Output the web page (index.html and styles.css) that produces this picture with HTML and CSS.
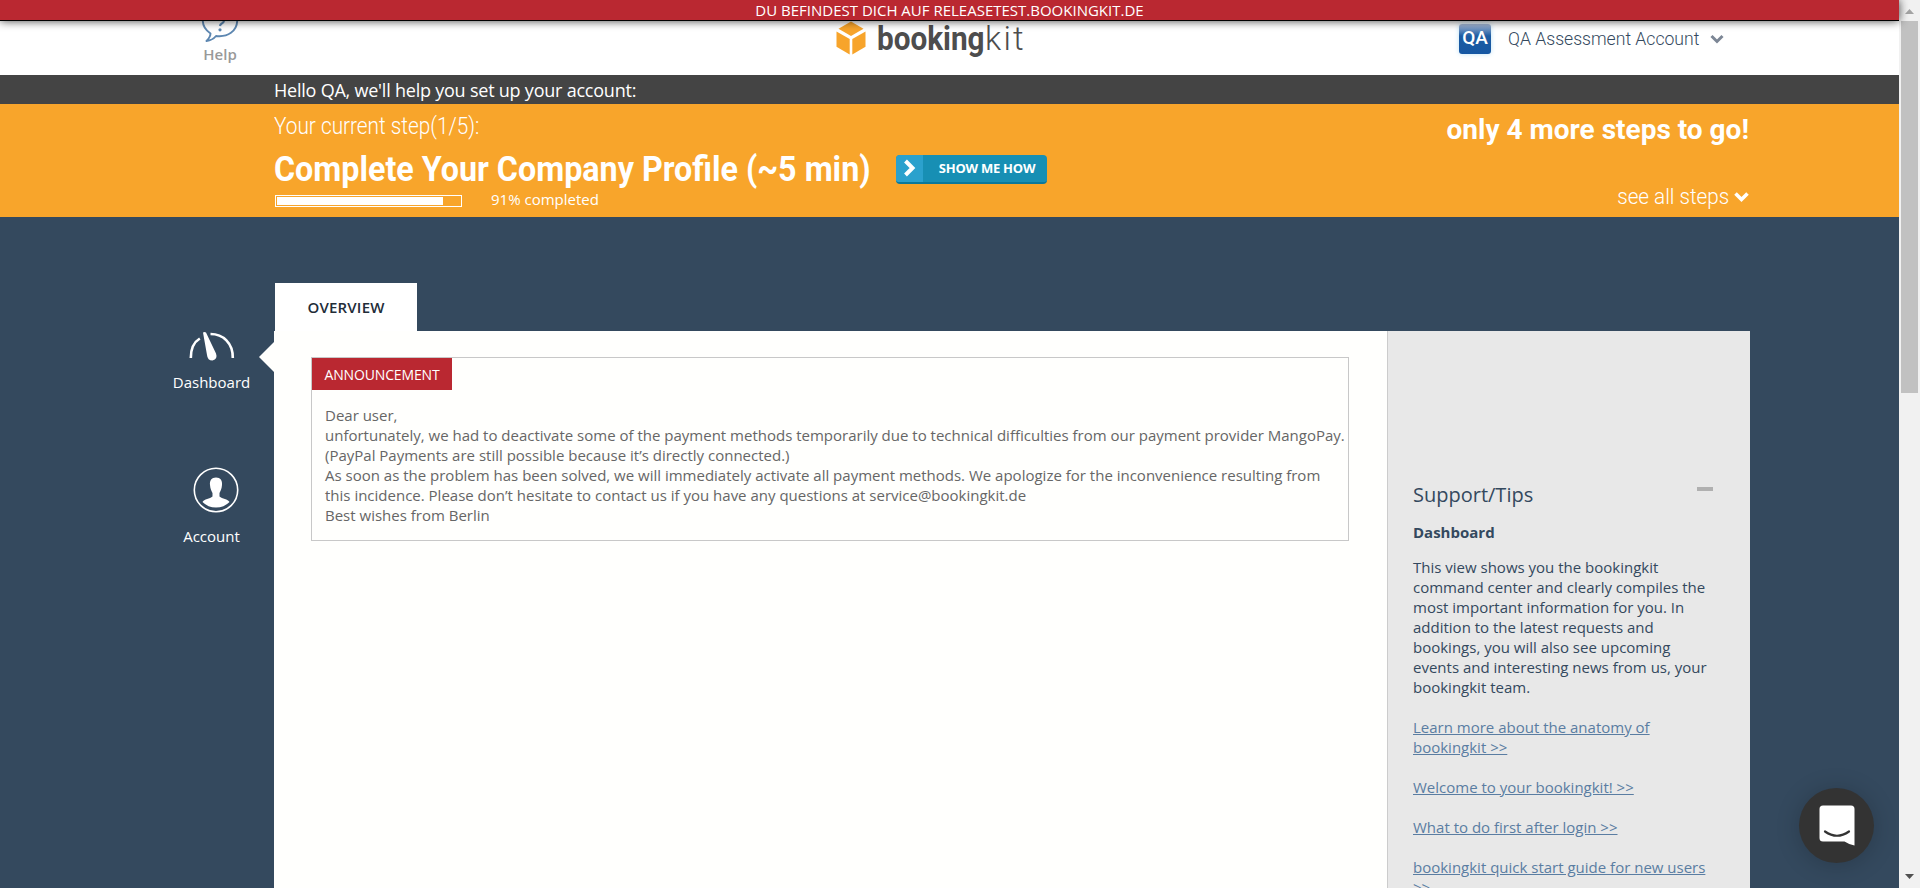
FILE: index.html
```html
<!DOCTYPE html>
<html lang="en">
<head>
<meta charset="utf-8">
<title>bookingkit – Dashboard</title>
<link rel="stylesheet" href="styles.css">
</head>
<body>
<div class="window">
  <div class="page">
    <div class="env-bar"><span class="env-text">DU BEFINDEST DICH AUF RELEASETEST.BOOKINGKIT.DE</span></div>
    <header class="header">
      <a class="help">
        <svg class="help-icon" width="40" height="22" viewBox="0 0 40 22"><path d="M2.8 0C3 6 6 9.500 10.500 12.500C10.500 15.500 8.500 18 6.500 20C10.500 19.500 14 17.500 16 15C28 16.500 36.800 10 37.200 0" fill="none" stroke="#5d87b1" stroke-width="1.900" stroke-linejoin="round"/><path d="M24 0Q23.500 1.800 21.500 2.800Q20.200 3.500 20 5" fill="none" stroke="#5d87b1" stroke-width="2.200"/><circle cx="20" cy="8.800" r="1.600" fill="#5d87b1"/></svg>
        <span class="help-label">Help</span>
      </a>
      <div class="logo">
        <svg width="30" height="34" viewBox="0 0 30 34"><g fill="#f7a42b"><path d="M15 .5L27.500 7.700L15 15L2.500 7.700Z"/><path d="M.5 10.500L13.700 18V33.500L.5 25.800Z"/><path d="M29.500 10.500L16.300 18V33.500L29.500 25.800Z"/></g></svg>
        <span class="logo-text"><b class="logo-booking">booking</b><span class="logo-kit">kit</span></span>
      </div>
      <div class="account">
        <span class="avatar"><span>QA</span></span>
        <span class="account-name"><span class="account-text">QA Assessment Account</span></span>
        <svg class="account-chevron" width="14" height="11" viewBox="0 0 14 11"><path d="M1.500 2L7 7.500L12.500 2" fill="none" stroke="#7c8695" stroke-width="3"/></svg>
      </div>
    </header>
    <div class="hello"><span class="hello-text">Hello QA, we'll help you set up your account:</span></div>
    <section class="setup">
      <div class="setup-left">
        <div class="step-now">Your current step(1/5):</div>
        <div class="step-row">
          <h1 class="step-title"><span class="title-text">Complete Your Company Profile (~5 min)</span></h1>
          <a class="how"><span class="how-icon"><svg width="13" height="18" viewBox="0 0 13 18"><path d="M2.500 2L9.500 9L2.500 16" fill="none" stroke="#fff" stroke-width="4"/></svg></span><span class="how-text">SHOW ME HOW</span></a>
        </div>
        <div class="progress-row">
          <div class="progress"><div class="progress-fill"></div></div>
          <span class="progress-text">91% completed</span>
        </div>
      </div>
      <div class="setup-right">
        <div class="remaining">only 4 more steps to go!</div>
        <div class="see-all"><span class="see-text">see all steps</span><svg width="15" height="12" viewBox="0 0 15 12"><path d="M1.500 2.500L7.500 8.500L13.500 2.500" fill="none" stroke="#fff" stroke-width="3.600"/></svg></div>
      </div>
    </section>
    <main class="main">
      <nav class="nav">
        <a class="nav-item">
          <svg width="46" height="30" viewBox="0 0 46 30"><g fill="none" stroke="#fff" stroke-width="2.600"><path d="M1.800 27C1.800 18 5 11 10.800 7.500"/><path d="M21.500 3C34 3 44 12 43.800 27"/></g><path d="M14 1.500Q15.500 .3 17 1.500L27 22.500Q29 28 23.500 29.500Q18.500 29.500 18 24Z" fill="#fff"/></svg>
          <span class="nav-dashboard">Dashboard</span>
        </a>
        <a class="nav-item nav-account">
          <svg width="46" height="46" viewBox="0 0 46 46"><circle cx="23" cy="23" r="21.700" fill="none" stroke="#fff" stroke-width="1.600"/><path d="M23 10.500C27.500 10.500 29.500 13.500 29 18C28.700 22 27.500 24 26.500 26V29.500C29 32 35 32 36.500 35Q31 40.500 23 40.500Q15 40.500 9.500 35C11 32 17 32 19.500 29.500V26C18.500 24 17.300 22 17 18C16.500 13.500 18.500 10.500 23 10.500Z" fill="#fff"/></svg>
          <span class="nav-acc-label">Account</span>
        </a>
      </nav>
      <div class="board">
        <div class="tab"><span>OVERVIEW</span></div>
        <div class="panel">
          <span class="pointer"></span>
          <div class="content">
            <section class="notice">
              <h2 class="notice-head">ANNOUNCEMENT</h2>
              <p class="notice-body">Dear user,<br>unfortunately, we had to deactivate some of the payment methods temporarily due to technical difficulties from our payment provider MangoPay.<br>(PayPal Payments are still possible because it’s directly connected.)<br>As soon as the problem has been solved, we will immediately activate all payment methods. We apologize for the inconvenience resulting from<br>this incidence. Please don’t hesitate to contact us if you have any questions at service@bookingkit.de<br>Best wishes from Berlin</p>
            </section>
          </div>
          <aside class="tips">
            <div class="tips-head"><h2>Support/Tips</h2><span class="collapse"></span></div>
            <h3>Dashboard</h3>
            <p>This view shows you the bookingkit<br>command center and clearly compiles the<br>most important information for you. In<br>addition to the latest requests and<br>bookings, you will also see upcoming<br>events and interesting news from us, your<br>bookingkit team.</p>
            <a>Learn more about the anatomy of<br>bookingkit &gt;&gt;</a>
            <a>Welcome to your bookingkit! &gt;&gt;</a>
            <a>What to do first after login &gt;&gt;</a>
            <a>bookingkit quick start guide for new users<br>&gt;&gt;</a>
          </aside>
        </div>
      </div>
    </main>
  </div>
  <div class="scrollbar">
    <svg width="17" height="21" viewBox="0 0 17 21"><path d="M4 14L8.500 9L13 14Z" fill="#a3a3a3"/></svg>
    <div class="thumb"></div>
    <svg class="scroll-down" width="17" height="21" viewBox="0 0 17 21"><path d="M4 13L8.500 18L13 13Z" transform="translate(0 -6)" fill="#505050"/></svg>
  </div>
  <div class="chat"><svg width="36" height="41" viewBox="0 0 36 41"><path d="M4 .5H32Q35.500 .5 35.500 4V40.500Q30 39.500 25.500 36.500H4Q.5 36.500 .5 33V4Q.5 .5 4 .5Z" fill="#fff"/><path d="M6 26.500Q18 35 30 26.500" fill="none" stroke="#333" stroke-width="2.200" stroke-linecap="round"/></svg></div>
</div>
</body>
</html>
```
FILE: styles.css
```css
* { box-sizing: border-box; }
body { margin: 0; font-family: "Open Sans", sans-serif; font-size: 15px; line-height: 20px; color: #666; }
h1, h2, h3, p { margin: 0; }
span, h1, .step-now, .remaining { white-space: nowrap; }
.window { position: relative; display: flex; width: 1920px; height: 888px; overflow: hidden; }
.page { display: flex; flex-direction: column; width: 1899px; background: #34495e; }

.env-bar { position: relative; z-index: 2; height: 21px; flex: none; background: #ba2831; border-bottom: 1px solid #000; box-shadow: 0 0 10px rgba(0,0,0,.75); color: #fff; font-size: 15px; line-height: 20px; text-align: center; }
.header { display: flex; flex: none; height: 54px; background: #fff; }
.help { display: flex; flex-direction: column; align-items: center; width: 40px; margin-left: 200px; }
.help-icon { flex: none; }
.help-label { margin-top: 1px; font-weight: 600; color: #999; }
.logo { display: flex; margin-left: 596px; width: 190px; }
.logo-text { display: flex; margin: 1px 0 0 11px; font: 33px/34px Roboto, sans-serif; color: #4d4d4d; }
.logo-booking { width: 108px; transform: scaleX(.9); transform-origin: 0 0; }
.logo-kit { font-weight: 300; letter-spacing: 2.2px; }
.account { display: flex; margin-left: 433px; }
.avatar { display: flex; align-items: center; justify-content: center; width: 32px; height: 30px; margin-top: 3px; border-radius: 3px; background: linear-gradient(#a9bbd8, #1d5ca2 40%, #1657a3); box-shadow: 0 0 5px #bfe2f5; color: #fff; font: 500 19px/30px Roboto, sans-serif; }
.avatar span { margin-top: -3px; }
.account-name { margin: 7px 0 0 17px; width: 192px; font: 300 18.700px/22px Roboto, sans-serif; color: #34495e; }
.account-text { display: inline-block; transform: scaleX(.942); transform-origin: 0 0; }
.account-chevron { margin: 13px 0 0 10px; }

.hello { flex: none; height: 29px; padding: 2px 0 0 274px; background: #444; color: #fff; font-size: 18px; line-height: 27px; letter-spacing: -.22px; }
.setup { display: flex; justify-content: space-between; flex: none; height: 113px; padding: 0 150px 0 274px; background: #f8a52b; color: #fff; }
.step-now { padding-top: 8px; font: 300 24px/29px Roboto, sans-serif; height: 38px; transform: scaleX(.866); transform-origin: 0 0; }
.step-row { display: flex; height: 52px; }
.step-title { width: 622px; padding-top: 7px; font: 700 35px/42px Roboto, sans-serif; }
.title-text { display: inline-block; transform: scaleX(.922); transform-origin: 0 0; }
.how { display: flex; width: 151px; height: 29px; margin-top: 13px; border-radius: 4px; border-bottom: 2px solid #0b789a; background: #178fb4; overflow: hidden; }
.how-icon { display: flex; align-items: center; justify-content: center; width: 27px; padding-bottom: 2px; background: #2ba1cd; }
.how-text { flex: 1; text-align: center; padding-left: 4px; font-size: 13px; font-weight: 700; line-height: 27px; letter-spacing: -.25px; }
.progress-row { display: flex; }
.progress { width: 187px; height: 12px; margin: 1px 0 0 1px; padding: 1px; border: 1px solid #fff; }
.progress-fill { width: 166px; height: 8px; background: #fff; }
.progress-text { margin: -5px 0 0 29px; }
.setup-right { display: flex; flex-direction: column; align-items: flex-end; }
.remaining { padding-top: 8px; font: 700 28px/36px Roboto, sans-serif; }
.see-all { display: flex; align-items: center; gap: 5px; margin-top: 35px; font: 300 22px/28px Roboto, sans-serif; }
.see-text { transform: scaleX(.94); transform-origin: 100% 0; }

.main { display: flex; flex: 1; min-height: 0; padding-top: 66px; }
.nav { width: 274px; color: #fff; }
.nav-item { display: flex; flex-direction: column; align-items: center; margin: 48px 0 0 150px; width: 123px; }
.nav-item svg { flex: none; }
.nav-dashboard { margin-top: 11px; }
.nav-account { margin-top: 75px; padding-left: 9px; }
.nav-acc-label { margin: 13px 9px 0 0; }
.board { width: 1476px; }
.tab { display: flex; align-items: center; justify-content: center; width: 142px; height: 48px; margin-left: 1px; background: #fff; color: #222c38; font-weight: 600; letter-spacing: .2px; }
.panel { position: relative; display: flex; height: 700px; background: #fffffd; }
.pointer { position: absolute; left: -15px; top: 11px; border: 15px solid transparent; border-left: 0; border-right-color: #fffffd; }
.content { width: 1113px; padding: 26px 0 0 37px; }
.notice { width: 1038px; height: 184px; border: 1px solid #c8c8c8; }
.notice-head { width: 140px; height: 32px; background: #ba2831; color: #fff; font-size: 14px; font-weight: 400; line-height: 34px; letter-spacing: -.15px; text-align: center; }
.notice-body { padding: 15px 0 0 13px; white-space: nowrap; }
.tips { width: 363px; padding: 150px 37px 0 25px; border-left: 1px solid #ccc; background: #e8e8e8; color: #34495e; white-space: nowrap; }
.tips-head { display: flex; justify-content: space-between; }
.tips h2 { font-size: 20px; font-weight: 400; line-height: 28px; }
.collapse { width: 16px; height: 4px; margin-top: 6px; background: #b0b0b0; }
.tips h3 { margin: 13px 0 15px; font-size: 15px; font-weight: 700; }
.tips a { display: block; margin-top: 20px; color: #5a7da2; text-decoration: underline; }

.scrollbar { display: flex; flex-direction: column; align-items: center; width: 21px; background: #f1f1f1; }
.thumb { width: 17px; height: 372px; background: #c1c1c1; }
.scroll-down { margin-top: auto; }
.chat { position: absolute; left: 1799px; top: 788px; display: flex; align-items: center; justify-content: center; width: 75px; height: 75px; border-radius: 50%; background: #333; box-shadow: 0 2px 24px rgba(0,0,0,.2); }
```
